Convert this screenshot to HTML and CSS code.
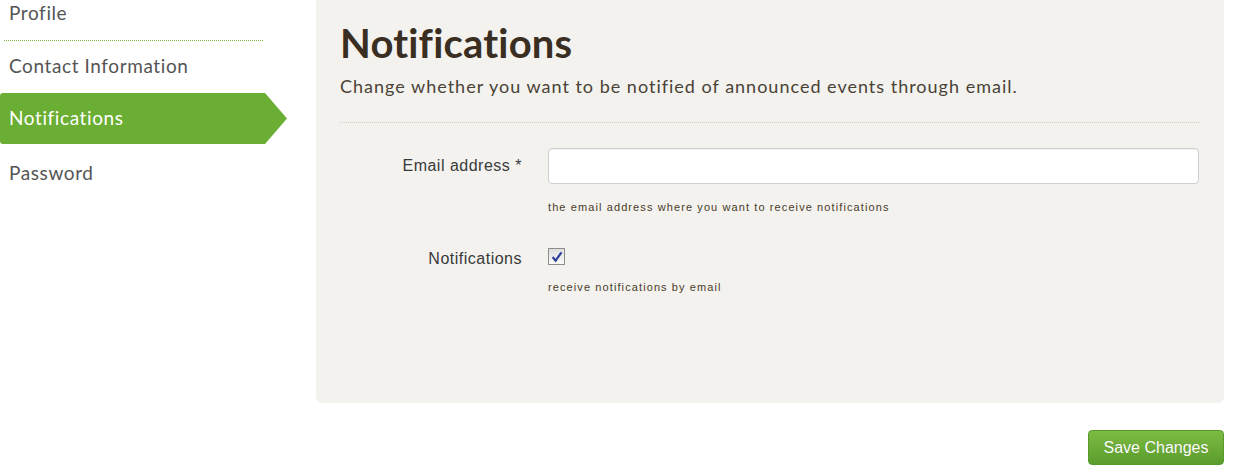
FILE: index.html
```html
<!DOCTYPE html>
<html>
<head>
<meta charset="utf-8">
<link rel="stylesheet" href="styles.css">
</head>
<body>
<div class="page">
  <nav class="sidebar">
    <a class="nav-item first">Profile</a>
    <a class="nav-item">Contact Information</a>
    <a class="nav-item active">Notifications</a>
    <a class="nav-item last">Password</a>
  </nav>
  <div class="content">
    <section class="panel">
      <h1 class="title">Notifications</h1>
      <p class="lead">Change whether you want to be notified of announced events through email.</p>
      <div class="rule"></div>
      <div class="form-row">
        <label class="label">Email address *</label>
        <div class="field">
          <input class="text-input" type="text">
          <div class="hint">the email address where you want to receive notifications</div>
        </div>
      </div>
      <div class="form-row row-check">
        <label class="label">Notifications</label>
        <div class="field">
          <span class="checkbox">
            <svg width="12" height="12" viewBox="0 0 11 11"><path d="M1.5 5.5 L4.2 8.8 L9.6 1.2" fill="none" stroke="#2f3f98" stroke-width="2"/></svg>
          </span>
          <div class="hint">receive notifications by email</div>
        </div>
      </div>
    </section>
    <div class="actions">
      <button class="btn">Save Changes</button>
    </div>
  </div>
</div>
</body>
</html>
```

FILE: styles.css
```css
html, body { margin: 0; padding: 0; background: #fff; }
body { font-family: Lato, "Open Sans", sans-serif; }
.page { display: flex; align-items: flex-start; }
.sidebar { width: 287px; flex: none; display: flex; flex-direction: column; margin-top: -13px; }
.nav-item {
  display: flex; align-items: center; height: 52px; padding-left: 9px; padding-bottom: 4px;
  font-size: 19px; letter-spacing: 0.6px; color: #555; box-sizing: border-box;
}
.nav-item.first { height: 54px; position: relative; }
.nav-item.first::after {
  content: ""; position: absolute; left: 4px; width: 259px; bottom: 0; height: 1px;
  background: repeating-linear-gradient(90deg, #7cbc3f 0 1px, transparent 1px 2px);
}
.nav-item.active {
  color: #fff; background: #6aae33; height: 51px; padding-bottom: 2px;
  width: 287px; border-radius: 3px 0 0 3px;
  clip-path: polygon(0 0, 265px 0, 287px 50%, 265px 100%, 0 100%);
}
.nav-item.last { padding-bottom: 0; padding-top: 4px; }
.content { width: 908px; margin-left: 29px; flex: none; }
.panel {
  background: #f3f2ef; border-radius: 0 0 6px 6px; height: 403px; box-sizing: border-box;
  padding: 19px 25px 0 24px;
}
.title { margin: 0; font-size: 40px; font-weight: 700; color: #3a2e22; line-height: 48px; letter-spacing: 0.2px; }
.lead { margin: 7px 0 0; font-size: 18px; letter-spacing: 1px; color: #4a4236; line-height: 24px; }
.rule { margin-top: 24px; height: 1px; background: repeating-linear-gradient(90deg, #cfcdc8 0 1px, transparent 1px 2px); }
.form-row { display: flex; margin-top: 25px; }
.label { width: 182px; flex: none; text-align: right; font-family: "Liberation Sans", Arial, sans-serif; font-size: 16px; letter-spacing: 0.5px; color: #3a3a3a; padding-top: 9px; }
.field { margin-left: 26px; flex: 1; }
.text-input {
  display: block; width: 100%; height: 36px; box-sizing: border-box; border: 1px solid #cfcfcf;
  border-radius: 4px; background: #fff; box-shadow: inset 0 1px 1px rgba(0,0,0,0.06); margin: 0;
}
.hint { font-family: "Liberation Sans", Arial, sans-serif; font-size: 11px; letter-spacing: 1.1px; color: #4a3b28; margin-top: 17px; }
.row-check { margin-top: 35px; }
.row-check .label { padding-top: 2px; }
.checkbox {
  display: flex; align-items: center; justify-content: center; width: 15px; height: 15px;
  border: 1px solid #8c8c8c; background: linear-gradient(#dedede, #fafafa); box-sizing: content-box;
}
.row-check .hint { margin-top: 16px; }
.actions { display: flex; justify-content: flex-end; margin-top: 27px; }
.btn {
  font-family: "Liberation Sans", Arial, sans-serif; font-size: 16px; color: #fff;
  background: linear-gradient(#7dbb43, #5a9d2c); border: 1px solid #559a2a; border-radius: 4px;
  width: 136px; height: 35px; padding: 0; text-shadow: 0 0 1px rgba(0,0,0,0.2);
}
```
